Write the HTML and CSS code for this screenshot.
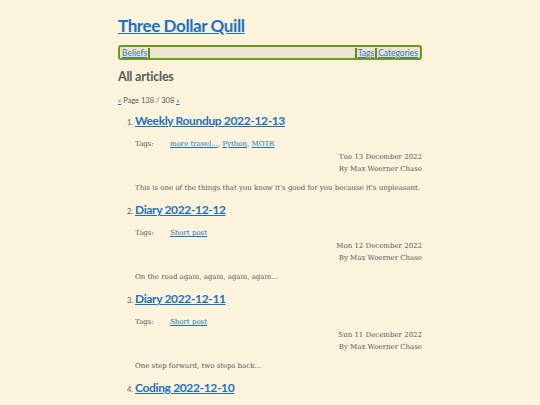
FILE: index.html
```html
<!DOCTYPE html>
<html>
<head>
<meta charset="utf-8">
<link rel="stylesheet" href="styles.css">
</head>
<body>
<div class="page">
  <h1 class="site-title"><a href="#">Three Dollar Quill</a></h1>
  <nav class="nav">
    <a href="#">Beliefs</a>
    <span class="sep"></span>
    <span class="spacer"></span>
    <span class="sep"></span>
    <a href="#">Tags</a>
    <span class="sep"></span>
    <a href="#">Categories</a>
  </nav>
  <h2 class="section-title">All articles</h2>
  <p class="pager"><a href="#">«</a> Page 138 / 308 <a href="#">»</a></p>
  <ol class="articles" start="1">
    <li class="article">
      <h3 class="article-title"><a href="#">Weekly Roundup 2022-12-13</a></h3>
      <div class="tags"><span class="tags-label">Tags:</span><span class="tags-list"><a href="#">more travel...</a>, <a href="#">Python</a>, <a href="#">MOTR</a></span></div>
      <div class="meta">Tue 13 December 2022<br>By Max Woerner Chase</div>
      <p class="summary">This is one of the things that you know it's good for you because it's unpleasant.</p>
    </li>
    <li class="article">
      <h3 class="article-title"><a href="#">Diary 2022-12-12</a></h3>
      <div class="tags"><span class="tags-label">Tags:</span><span class="tags-list"><a href="#">Short post</a></span></div>
      <div class="meta">Mon 12 December 2022<br>By Max Woerner Chase</div>
      <p class="summary">On the road again, again, again, again...</p>
    </li>
    <li class="article">
      <h3 class="article-title"><a href="#">Diary 2022-12-11</a></h3>
      <div class="tags"><span class="tags-label">Tags:</span><span class="tags-list"><a href="#">Short post</a></span></div>
      <div class="meta">Sun 11 December 2022<br>By Max Woerner Chase</div>
      <p class="summary">One step forward, two steps back...</p>
    </li>
    <li class="article">
      <h3 class="article-title"><a href="#">Coding 2022-12-10</a></h3>
      <div class="tags"><span class="tags-label">Tags:</span><span class="tags-list"><a href="#">Short post</a></span></div>
      <div class="meta">Sat 10 December 2022<br>By Max Woerner Chase</div>
      <p class="summary">...</p>
    </li>
  </ol>
</div>
</body>
</html>
```
FILE: styles.css
```css
html, body {
  margin: 0;
  padding: 0;
  background: #fcf3dc;
}
body {
  font-family: "DejaVu Serif", serif;
  color: #5a5a5a;
}
a {
  color: #1a72c4;
}
.page {
  width: 304px;
  margin: 0 auto;
  padding-top: 14px;
}
.site-title {
  font-family: Lato, sans-serif;
  font-size: 17px;
  font-weight: 700;
  margin: 0 0 7px 0;
  line-height: 24px;
  letter-spacing: -0.4px;
}
.nav {
  display: flex;
  align-items: center;
  border: 2px solid #6a9c1f;
  border-radius: 3px;
  background: #ebe4cf;
  height: 11px;
  padding: 0 2px;
  font-family: Lato, sans-serif;
  font-size: 8.5px;
  gap: 1px;
}
.nav a {
  color: #3b76b8;
}
.sep {
  width: 2px;
  height: 10px;
  background: #5e8e1a;
}
.spacer {
  flex: 1;
}
.section-title {
  font-family: Lato, sans-serif;
  font-size: 12.5px;
  font-weight: 700;
  color: #555a5c;
  margin: 9px 0 0 0;
  line-height: 16px;
  letter-spacing: -0.2px;
}
.pager {
  font-family: Lato, sans-serif;
  font-size: 7.5px;
  margin: 11px 0 0 0;
  line-height: 10px;
}
.articles {
  margin: 7px 0 0 0;
  padding-left: 17px;
  font-family: Lato, sans-serif;
  font-size: 7.5px;
}
.article {
  margin: 0;
}
.article-title {
  display: inline;
  font-size: 12px;
  font-weight: 700;
  line-height: 16px;
  letter-spacing: -0.35px;
}
.tags {
  display: flex;
  font-family: "DejaVu Serif", serif;
  font-size: 7px;
  margin-top: 10px;
  line-height: 10px;
}
.tags-label {
  width: 35px;
}
.meta {
  font-family: "DejaVu Serif", serif;
  font-size: 7px;
  text-align: right;
  line-height: 12px;
  margin-top: 2px;
}
.summary {
  font-family: "DejaVu Serif", serif;
  font-size: 7px;
  line-height: 10px;
  white-space: nowrap;
  margin: 8px 0 9px 0;
}
```
